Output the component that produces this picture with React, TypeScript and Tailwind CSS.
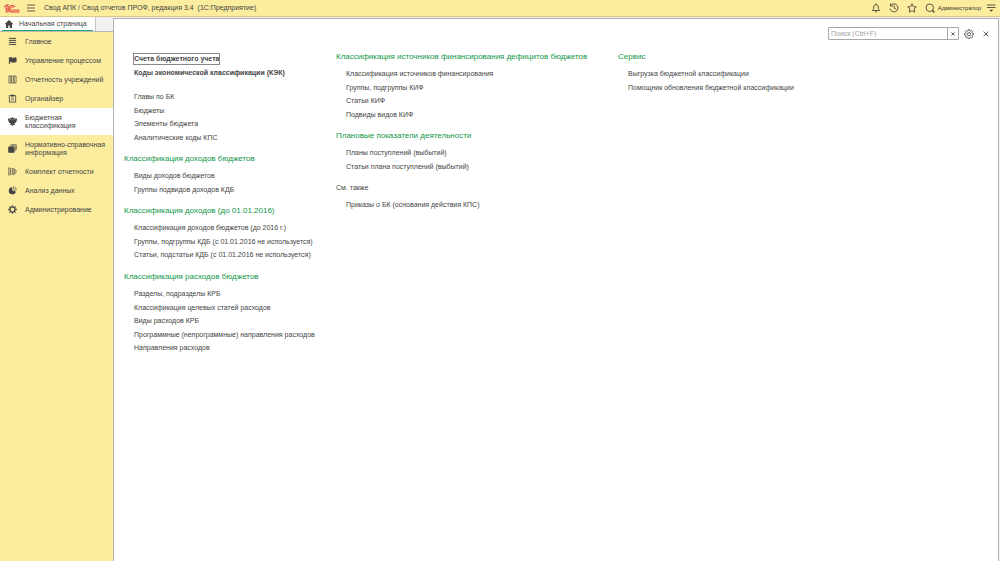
import type { ReactNode } from "react";

type Group = { title?: string; plain?: boolean; items: string[]; bold?: boolean };

const columns: Group[][] = [
  [
    { bold: true, items: ["Счета бюджетного учета", "Коды экономической классификации (КЭК)"] },
    { items: ["Главы по БК", "Бюджеты", "Элементы бюджета", "Аналитические коды КПС"] },
    { title: "Классификация доходов бюджетов", items: ["Виды доходов бюджетов", "Группы подвидов доходов КДБ"] },
    {
      title: "Классификация доходов (до 01.01.2016)",
      items: [
        "Классификация доходов бюджетов (до 2016 г.)",
        "Группы, подгруппы КДБ (с 01.01.2016 не используется)",
        "Статьи, подстатьи КДБ (с 01.01.2016 не используется)",
      ],
    },
    {
      title: "Классификация расходов бюджетов",
      items: [
        "Разделы, подразделы КРБ",
        "Классификация целевых статей расходов",
        "Виды расходов КРБ",
        "Программные (непрограммные) направления расходов",
        "Направления расходов",
      ],
    },
  ],
  [
    {
      title: "Классификация источников финансирования дефицитов бюджетов",
      items: ["Классификация источников финансирования", "Группы, подгруппы КИФ", "Статьи КИФ", "Подвиды видов КИФ"],
    },
    {
      title: "Плановые показатели деятельности",
      items: ["Планы поступлений (выбытий)", "Статьи плана поступлений (выбытий)"],
    },
    { title: "См. также", plain: true, items: ["Приказы о БК (основания действия КПС)"] },
  ],
  [
    {
      title: "Сервис",
      items: ["Выгрузка бюджетной классификации", "Помощник обновления бюджетной классификации"],
    },
  ],
];

function Icon({ children, className = "size-[10px]" }: { children: ReactNode; className?: string }) {
  return (
    <svg viewBox="0 0 20 20" className={`${className} shrink-0`} fill="none" stroke="currentColor" strokeWidth="1.8" aria-hidden="true">
      {children}
    </svg>
  );
}

const gearPath =
  "M8.5 1.5h3l.5 2.6 1.8.8 2.2-1.5 2.1 2.1-1.5 2.2.8 1.8 2.6.5v3l-2.6.5-.8 1.8 1.5 2.2-2.1 2.1-2.2-1.5-1.8.8-.5 2.6h-3l-.5-2.6-1.8-.8L4 19.6l-2.1-2.1 1.5-2.2-.8-1.8L0 13v-3l2.6-.5.8-1.8L1.9 5.5 4 3.4l2.2 1.5 1.8-.8z";

const sections: { label: string; icon: ReactNode; active?: boolean; tall?: boolean }[] = [
  {
    label: "Главное",
    icon: <path d="M2 3h16M2 7.500h16M2 12h16M2 16.500h16" strokeWidth="2.200" />,
  },
  {
    label: "Управление процессом",
    icon: (
      <>
        <path d="M3 3v15" strokeWidth="2" />
        <path d="M4 3.500c3-1 5 1.500 7 1.500s4-1 7-1v9c-3 0-5 1-7 1s-4-2-7-1z" fill="currentColor" />
      </>
    ),
  },
  {
    label: "Отчетность учреждений",
    icon: <path d="M2 2h4v16H2zM8 2h4v16H8zM14 2h4v16h-4z" strokeWidth="1.500" />,
  },
  {
    label: "Органайзер",
    icon: (
      <>
        <path d="M3 3.500h14V18H3z" />
        <path d="M6.500 9h7M6.500 13h7" strokeWidth="1.500" />
        <path d="M6.500 1.500h7V5.500h-7z" fill="currentColor" stroke="none" />
      </>
    ),
  },
  {
    label: "Бюджетная классификация",
    active: true,
    tall: true,
    icon: (
      <path
        fill="currentColor"
        stroke="none"
        d="M10 0l1.500 2.500L14 1l1.500 3-3 1.500.5 2L15.500 4 20 3.500V6l-.8.500.5 2-1.200.5.300 2-1.600.3v2l-2.200-.2-1.500 1.400 2.500 1.500-1 2-2.500-1L10 20l-2.500-3-2.500 1-1-2 2.500-1.500L5 13.100l-2.200.2v-2l-1.600-.3.300-2L.3 8.500l.5-2L0 6V3.500L4.500 4 7 7.500l.5-2-3-1.500L6 1l2.500 1.500z"
      />
    ),
  },
  {
    label: "Нормативно-справочная информация",
    tall: true,
    icon: (
      <>
        <path d="M1.500 6.500h12v12h-12z" fill="currentColor" />
        <path d="M4 4h12v12M6.500 1.500h12v12" strokeWidth="1.500" />
      </>
    ),
  },
  {
    label: "Комплект отчетности",
    icon: (
      <>
        <path d="M1 2h2M1 18h2M2 2v16M6 2v16M10.500 2v16" />
        <path d="M11.500 4c4 0 6.500 3 6.500 6s-2.500 6-6.500 6M14 6v8" />
      </>
    ),
  },
  {
    label: "Анализ данных",
    icon: (
      <>
        <path d="M9 2.500A8 8 0 1 0 17.500 12l-8-2z" fill="currentColor" stroke="none" />
        <path d="M11.500 1.500A7.500 7.500 0 0 1 18.500 9l-7-.5z" strokeWidth="1.300" />
      </>
    ),
  },
  {
    label: "Администрирование",
    icon: (
      <>
        <circle cx="10" cy="10" r="5.500" strokeWidth="2.600" />
        <path d="M10 .5v4M10 15.500v4M.5 10h4M15.500 10h4M3.300 3.300l2.800 2.800M13.900 13.900l2.800 2.800M3.300 16.700l2.800-2.800M13.900 6.100l2.800-2.800" strokeWidth="2.800" />
      </>
    ),
  },
];

function Header() {
  return (
    <header className="flex h-[17px] shrink-0 items-center border-b border-[#d5ca8c] bg-[#fbec9e] pl-1 pr-1">
      <svg viewBox="0 0 32 18" className="h-[9px] w-4 shrink-0" fill="none" stroke="#e0333c" strokeWidth="2.200" aria-label="1С" role="img">
        <path d="M1 6.500l4.500-4.500H8V17M4.500 7v10" />
        <path d="M22 6A6.500 6.500 0 1 0 16.500 16H31" />
        <path d="M19 7A3.200 3.200 0 1 0 16.500 12.300H31" strokeWidth="1.800" />
      </svg>
      <button type="button" aria-label="Меню" className="ml-[6px] text-[#555040]">
        <Icon>
          <path d="M2 4h16M2 10h16M2 16h16" />
        </Icon>
      </button>
      <h1 className="ml-2 whitespace-pre text-[7px] leading-[10px]">Свод АПК / Свод отчетов ПРОФ, редакция 3.4  (1С:Предприятие)</h1>
      <div className="ml-auto flex items-center gap-2 text-[#4a4636]">
        <button type="button" aria-label="Уведомления">
          <Icon>
            <path d="M2.500 15c2-2 3-3 3-7 0-3 2-4.500 4.500-4.500s4.500 1.500 4.500 4.500c0 4 1 5 3 7zM10 1v2.500M8 17.500h4" />
          </Icon>
        </button>
        <button type="button" aria-label="История">
          <Icon>
            <path d="M3.500 5A8 8 0 1 1 2 11M3 1v5h5M10.500 5v5.500l4 2" />
          </Icon>
        </button>
        <button type="button" aria-label="Избранное">
          <Icon>
            <path d="M10 1.500l2.600 5.700 6 .7-4.400 4.200 1.200 6.200-5.400-3.100-5.400 3.100 1.200-6.200L1.400 7.900l6-.7z" />
          </Icon>
        </button>
        <button type="button" aria-label="Поиск">
          <Icon>
            <circle cx="9.500" cy="9.500" r="7.500" />
            <path d="M14.500 14.500l4.500 4.500" strokeWidth="2.500" />
          </Icon>
        </button>
        <div className="-ml-[5px] flex items-center gap-[5px]">
          <a href="#user" className="text-[6px] leading-[10px] text-[#333]">Администратор</a>
          <button type="button" aria-label="Настройки окна">
            <Icon>
              <path d="M2 4h17M2 9h17" />
              <path d="M6.500 13.500h8l-4 4z" fill="currentColor" stroke="none" />
            </Icon>
          </button>
        </div>
      </div>
    </header>
  );
}

function Sidebar() {
  return (
    <nav aria-label="Разделы" className="flex-1 bg-[#fbec9e]">
      {sections.map((s) => (
        <a
          key={s.label}
          href="#section"
          aria-current={s.active ? "page" : undefined}
          className={`flex items-center gap-2 pl-2 text-[7px] leading-[8px] ${s.tall ? "h-[27px]" : "h-[19px]"} ${s.active ? "bg-white" : ""}`}
        >
          <Icon className="size-[9px] text-[#444]">{s.icon}</Icon>
          <span>{s.label}</span>
        </a>
      ))}
    </nav>
  );
}

function LinkGroup({ group, first }: { group: Group; first: boolean }) {
  return (
    <section className={group.title ? (first ? "" : "mt-[5px]") : first ? "pt-[5px]" : "mt-[11px]"}>
      {group.title && (
        <h2 className={`h-5 whitespace-nowrap leading-[20px] ${group.plain ? "text-[7px]" : "text-[8px] text-[#0f9648]"}`}>
          {group.title}
        </h2>
      )}
      <ul className="pl-[10px]">
        {group.items.map((item, i) => (
          <li key={item} className="flex items-center whitespace-nowrap odd:h-[14px] even:h-[13px]">
            <a
              href="#item"
              className={`text-[7px] leading-[10px] ${group.bold ? "font-bold" : ""} ${group.bold && i === 0 ? "outline outline-1 outline-[#888]" : ""}`}
            >
              {item}
            </a>
          </li>
        ))}
      </ul>
    </section>
  );
}

export default function App() {
  return (
    <div className="flex min-h-screen flex-col bg-[#f1f1f1] font-['Liberation_Sans',Arial,sans-serif] text-[#444]">
      <Header />
      <div className="flex flex-1">
        <div className="flex w-[113px] shrink-0 flex-col">
          <div className="flex h-[15px] border-b border-[#b9b9b9]">
            <a href="#home" className="flex w-24 items-start border-r border-[#c4c4c4] bg-white pl-[2px] pr-[2px]">
              <span className="flex h-[14px] flex-1 items-center gap-[5px] border-b border-[#21a861] pl-[2px] text-[7px] leading-[10px]">
                <Icon>
                  <path d="M10 2l9 8.500h-3V18h-4.500v-5h-3v5H4v-7.500H1z" fill="currentColor" stroke="none" />
                </Icon>
                <span className="whitespace-nowrap">Начальная страница</span>
              </span>
            </a>
          </div>
          <Sidebar />
        </div>
        <main className="mr-px mt-px flex-1 border-l border-r border-t border-[#b4b4b4] bg-white">
          <div className="mt-2 flex h-[13px] items-center justify-end pr-2">
            <form className="flex h-[13px] w-[131px] rounded-[1px] border border-[#a8a8a8]" onSubmit={(e) => e.preventDefault()}>
              <input
                type="text"
                aria-label="Поиск"
                placeholder="Поиск (Ctrl+F)"
                className="min-w-0 flex-1 px-[2px] text-[7px] leading-[10px] outline-none placeholder:text-[#a0a0a0]"
              />
              <button type="reset" aria-label="Очистить" className="flex w-[11px] items-center justify-center border-l border-[#a8a8a8]">
                <Icon className="size-[4px]">
                  <path d="M2 2l16 16M18 2L2 18" strokeWidth="4" />
                </Icon>
              </button>
            </form>
            <button type="button" aria-label="Настройка" className="ml-[5px]">
              <Icon>
                <g transform="translate(1 0) scale(.9)">
                  <path d={gearPath} />
                  <circle cx="10" cy="11.500" r="3.500" />
                </g>
              </Icon>
            </button>
            <button type="button" aria-label="Закрыть" className="ml-2">
              <Icon className="size-2">
                <path d="M4 4l12 12M16 4L4 16" strokeWidth="2.200" />
              </Icon>
            </button>
          </div>
          <div className="mt-[7px] grid grid-cols-[212px_282px_1fr] pl-[10px]">
            {columns.map((groups, c) => (
              <div key={c}>
                {groups.map((g, i) => (
                  <LinkGroup key={g.items[0]} group={g} first={i === 0} />
                ))}
              </div>
            ))}
          </div>
        </main>
      </div>
    </div>
  );
}
